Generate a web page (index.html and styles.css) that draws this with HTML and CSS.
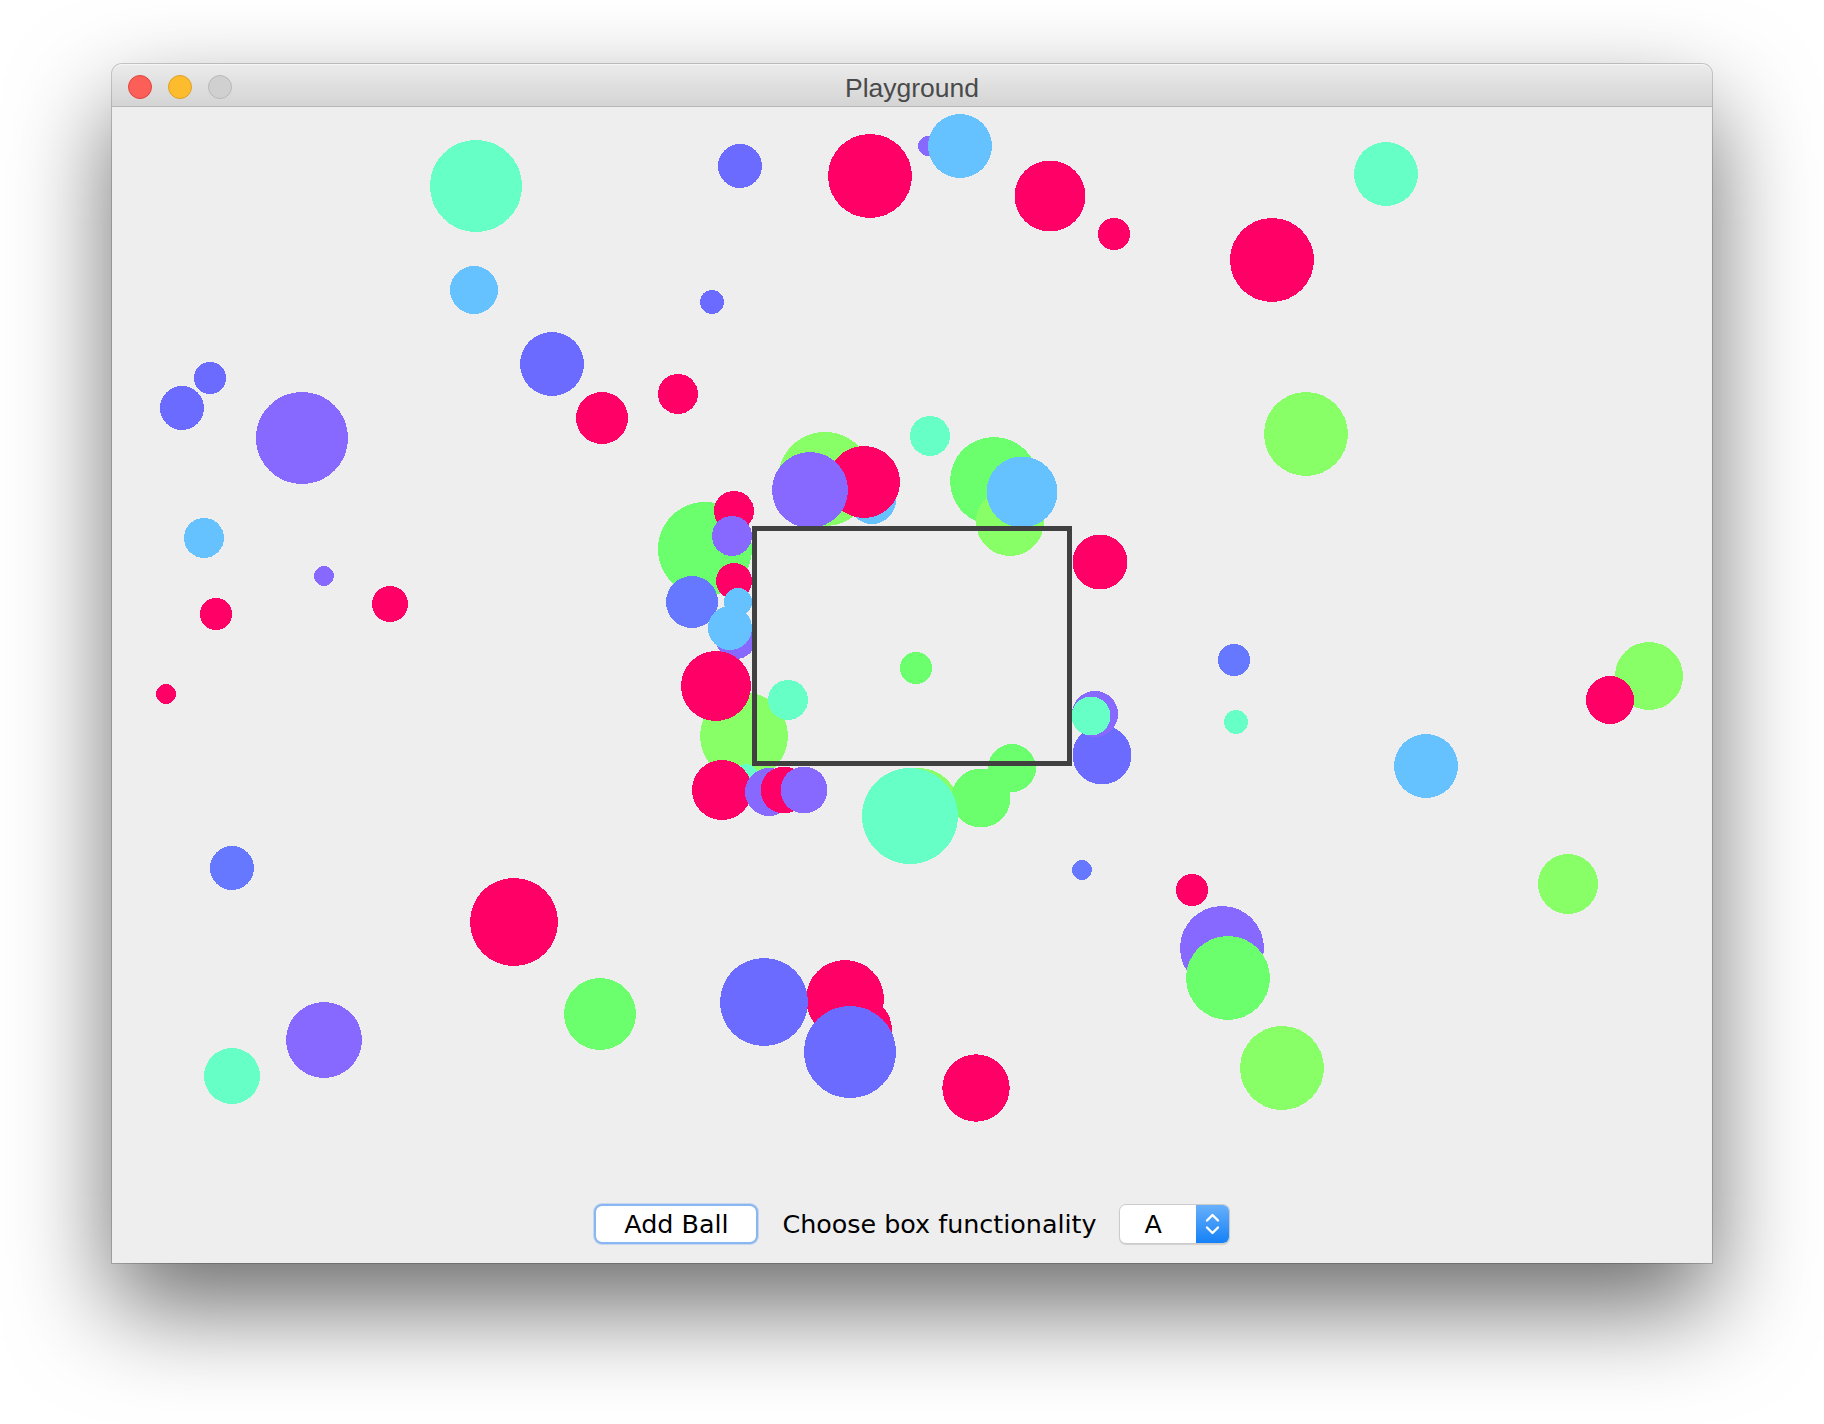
FILE: index.html
```html
<!DOCTYPE html>
<html>
<head>
<meta charset="utf-8">
<title>Playground</title>
<link rel="stylesheet" href="styles.css">
</head>
<body>
<div class="window">
  <div class="titlebar">
    <div class="lights">
      <span class="light light-close"></span>
      <span class="light light-min"></span>
      <span class="light light-zoom"></span>
    </div>
    <div class="title">Playground</div>
    <div class="spacer"></div>
  </div>
  <div class="content">
    <svg class="board" width="1600" height="1078" viewBox="0 0 1600 1078" shape-rendering="crispEdges">
      <circle class="teal" cx="364" cy="79" r="46"/>
      <circle class="lblue" cx="362" cy="183" r="24"/>
      <circle class="blue" cx="440" cy="257" r="32"/>
      <circle class="red" cx="490" cy="311" r="26"/>
      <circle class="blue" cx="98" cy="271" r="16"/>
      <circle class="blue" cx="70" cy="301" r="22"/>
      <circle class="purple" cx="190" cy="331" r="46"/>
      <circle class="lblue" cx="92" cy="431" r="20"/>
      <circle class="purple" cx="212" cy="469" r="10"/>
      <circle class="red" cx="104" cy="507" r="16"/>
      <circle class="red" cx="278" cy="497" r="18"/>
      <circle class="red" cx="54" cy="587" r="10"/>
      <circle class="blue" cx="628" cy="59" r="22"/>
      <circle class="red" cx="758" cy="69" r="42"/>
      <circle class="purple" cx="816" cy="39" r="10"/>
      <circle class="lblue" cx="848" cy="39" r="32"/>
      <circle class="red" cx="938" cy="89" r="35.5"/>
      <circle class="red" cx="1002" cy="127" r="16"/>
      <circle class="blue" cx="600" cy="195" r="12"/>
      <circle class="red" cx="566" cy="287" r="20"/>
      <circle class="teal" cx="818" cy="329" r="20"/>
      <circle class="red" cx="988" cy="455" r="27.5"/>
      <circle class="blue2" cx="970" cy="763" r="10"/>
      <circle class="red" cx="1080" cy="783" r="16"/>
      <circle class="red" cx="864" cy="981" r="33.7"/>
      <circle class="teal" cx="1274" cy="67" r="32"/>
      <circle class="red" cx="1160" cy="153" r="42"/>
      <circle class="lgreen" cx="1194" cy="327" r="42"/>
      <circle class="blue2" cx="1122" cy="553" r="16"/>
      <circle class="lgreen" cx="1537" cy="569" r="34"/>
      <circle class="red" cx="1498" cy="593" r="24"/>
      <circle class="teal" cx="1124" cy="615" r="12"/>
      <circle class="lblue" cx="1314" cy="659" r="32"/>
      <circle class="lgreen" cx="1456" cy="777" r="30"/>
      <circle class="purple" cx="1110" cy="841" r="42"/>
      <circle class="green" cx="1116" cy="871" r="42"/>
      <circle class="lgreen" cx="1170" cy="961" r="42"/>
      <circle class="blue2" cx="120" cy="761" r="22"/>
      <circle class="red" cx="402" cy="815" r="44"/>
      <circle class="green" cx="488" cy="907" r="36"/>
      <circle class="purple" cx="212" cy="933" r="38"/>
      <circle class="teal" cx="120" cy="969" r="28"/>

      <circle class="lgreen" cx="713" cy="372" r="47"/>
      <circle class="lblue" cx="760" cy="393" r="24"/>
      <circle class="red" cx="752" cy="375" r="36"/>
      <circle class="purple" cx="698" cy="383" r="38"/>

      <circle class="green" cx="882" cy="374" r="44"/>
      <circle class="lgreen" cx="898" cy="415" r="34"/>
      <circle class="lblue" cx="910" cy="385" r="35.5"/>

      <circle class="green" cx="593" cy="442" r="47"/>
      <circle class="red" cx="622" cy="404" r="20"/>
      <circle class="purple" cx="620" cy="429" r="20"/>
      <circle class="red" cx="622" cy="474" r="18"/>
      <circle class="blue2" cx="580" cy="495" r="26"/>
      <circle class="purple" cx="624" cy="532" r="20"/>
      <circle class="lblue" cx="626" cy="495" r="14"/>
      <circle class="lblue" cx="618" cy="521" r="22"/>

      <circle class="lgreen" cx="632" cy="629" r="44"/>
      <circle class="red" cx="604" cy="579" r="35"/>
      <circle class="teal" cx="676" cy="593" r="20"/>
      <circle class="green" cx="804" cy="561" r="16"/>
      <circle class="teal" cx="634" cy="669" r="12"/>
      <circle class="red" cx="610" cy="683" r="30"/>
      <circle class="purple" cx="657" cy="685" r="24"/>
      <circle class="red" cx="672" cy="683" r="23.5"/>
      <circle class="purple" cx="692" cy="683" r="23.5"/>

      <circle class="lgreen" cx="807" cy="701" r="40"/>
      <circle class="green" cx="900" cy="661" r="24"/>
      <circle class="green" cx="869" cy="691" r="29.5"/>
      <circle class="teal" cx="798" cy="709" r="48"/>

      <circle class="blue" cx="990" cy="648" r="29.5"/>
      <circle class="purple" cx="983" cy="607" r="23"/>
      <circle class="teal" cx="979" cy="609" r="19.5"/>

      <circle class="red" cx="733" cy="892" r="39"/>
      <circle class="red" cx="746" cy="923" r="34"/>
      <circle class="blue" cx="652" cy="895" r="44"/>
      <circle class="blue" cx="738" cy="945" r="46"/>

      <rect class="box" x="642.5" y="421.5" width="315" height="235"/>
    </svg>
    <div class="controls">
      <button class="btn" type="button">Add Ball</button>
      <span class="label">Choose box functionality</span>
      <div class="combo">
        <span class="combo-value">A</span>
        <span class="combo-arrows">
          <svg width="33" height="40" viewBox="0 0 33 40">
            <polyline points="11,16.5 16.5,11 22,16.5" fill="none" stroke="#fff" stroke-width="2.4" stroke-linecap="round" stroke-linejoin="round"/>
            <polyline points="11,23.5 16.5,29 22,23.5" fill="none" stroke="#fff" stroke-width="2.4" stroke-linecap="round" stroke-linejoin="round"/>
          </svg>
        </span>
      </div>
    </div>
  </div>
</div>
</body>
</html>
```

FILE: styles.css
```css
html, body {
  margin: 0;
  padding: 0;
  background: #ffffff;
}

body {
  width: 1824px;
  height: 1424px;
  overflow: hidden;
}

.window {
  margin: 64px 0 0 112px;
  width: 1600px;
  height: 1199px;
  border-radius: 10px 10px 0 0;
  background: #eeeeee;
  box-shadow: 0 44px 100px rgba(0, 0, 0, 0.58), 0 0 0 1px rgba(0, 0, 0, 0.18);
  display: flex;
  flex-direction: column;
  overflow: hidden;
}

.titlebar {
  height: 42px;
  border-bottom: 1px solid #b6b6b6;
  background: linear-gradient(#ebebeb, #d4d4d4);
  border-radius: 10px 10px 0 0;
  display: grid;
  grid-template-columns: 1fr auto 1fr;
  align-items: center;
  box-shadow: inset 0 1px 0 #f6f6f6;
}

.lights {
  display: flex;
  gap: 16px;
  padding-left: 16px;
  align-items: center;
}

.light {
  width: 24px;
  height: 24px;
  border-radius: 50%;
  box-sizing: border-box;
}

.light-close {
  background: #fc5f57;
  border: 1px solid #e0443e;
}

.light-min {
  background: #fdbc2e;
  border: 1px solid #dea123;
}

.light-zoom {
  background: #d0d0d0;
  border: 1px solid #b8b8b8;
}

.title {
  font-family: "Liberation Sans", Arial, sans-serif;
  font-size: 26.5px;
  color: #4a4a4a;
  line-height: 42px;
  padding-top: 3px;
}

.content {
  flex: 1;
  display: flex;
  flex-direction: column;
  background: #eeeeee;
}

.board {
  display: block;
  width: 1600px;
  height: 1078px;
}

.board .red { fill: #ff0066; }
.board .teal { fill: #66ffc6; }
.board .lblue { fill: #66c2ff; }
.board .blue { fill: #6b6bff; }
.board .blue2 { fill: #6678ff; }
.board .purple { fill: #8769ff; }
.board .green { fill: #6bff6e; }
.board .lgreen { fill: #88ff66; }

.board .box {
  fill: none;
  stroke: #404040;
  stroke-width: 5;
}

.controls {
  height: 78px;
  display: flex;
  align-items: center;
  justify-content: center;
  font-family: "DejaVu Sans", "Liberation Sans", sans-serif;
  font-size: 25.4px;
  color: #000000;
}

.btn {
  width: 164px;
  height: 40px;
  box-sizing: border-box;
  background: #ffffff;
  border: 2px solid #8ab6f2;
  border-radius: 8px;
  box-shadow: 0 0 0 1px rgba(120, 170, 240, 0.35);
  font-family: inherit;
  font-size: 25.4px;
  color: #000000;
  padding: 0;
  margin-right: 24px;
}

.label {
  margin-right: 22px;
  white-space: nowrap;
}

.combo {
  width: 111px;
  height: 40px;
  box-sizing: border-box;
  display: flex;
  background: #ffffff;
  border: 1px solid #cbcbcb;
  border-radius: 7px;
  box-shadow: 0 1px 1px rgba(0, 0, 0, 0.12);
  overflow: hidden;
}

.combo-value {
  flex: 1;
  padding-left: 25px;
  line-height: 38px;
}

.combo-arrows {
  width: 33px;
  display: flex;
  align-items: center;
  justify-content: center;
  background: linear-gradient(#68b0fb, #1581f6);
}

.combo-arrows svg {
  display: block;
}
```
